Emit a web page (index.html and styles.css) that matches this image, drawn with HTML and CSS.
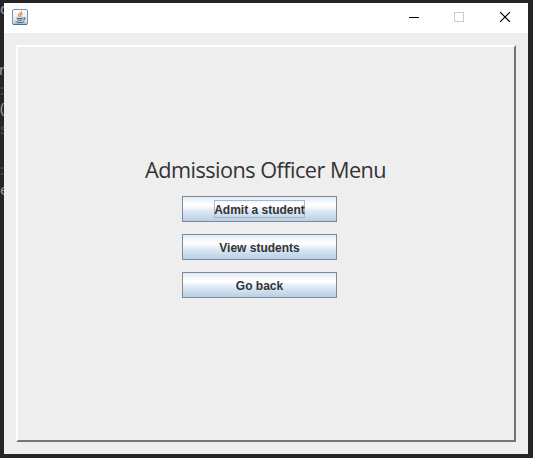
FILE: index.html
```
<!DOCTYPE html>
<html lang="en">
<head>
<meta charset="utf-8">
<title>Admissions Officer Menu</title>
<link rel="stylesheet" href="styles.css">
</head>
<body>
<div class="editor" aria-hidden="true">
  <span class="code code-d">d</span>
  <span class="code code-r">r</span>
  <span class="code code-i">:</span>
  <span class="code code-paren">(</span>
  <span class="code code-s">s</span>
  <span class="code code-i2">:</span>
  <span class="code code-e">e</span>
</div>
<div class="window">
  <header class="titlebar">
    <svg class="java" width="16" height="16" viewBox="0 0 16 16">
      <defs><linearGradient id="tile" x1="0" y1="0" x2="0" y2="1"><stop offset="0" stop-color="#fff"/><stop offset="1" stop-color="#d3dce4"/></linearGradient></defs>
      <rect x=".5" y=".5" width="15" height="15" rx="1.5" fill="url(#tile)" stroke="#7295b2"/>
      <path d="M1 15.300h14" stroke="#426f96" stroke-width="1.2"/>
      <path d="M9.6 2.2c.5 2-3.6 2.6-3.1 4.3.2.7.8 1 .9 1.6M10.6 4.6C8.800 5.400 8.200 6 8.900 6.900c.3.5.1.9-.4 1.300" fill="none" stroke="#e8873c" stroke-width="1.200"/>
      <path d="M4.500 8.900c1.800.6 4.600.6 6.500 0M5.300 10.700c1.600.6 3.600.6 5 0M11.300 8.800c2.300-.6 2.200 1.700-.1 2.200M3.500 12.500c2.600 1 6.600 1 9-.1" fill="none" stroke="#456b88" stroke-width="1.100"/>
    </svg>
    <div class="controls">
      <svg width="46" height="30" viewBox="0 0 46 30"><path d="M18 14.500h10" stroke="#000"/></svg>
      <svg width="46" height="30" viewBox="0 0 46 30"><rect x="17.500" y="9.500" width="9" height="9" fill="none" stroke="#ccc"/></svg>
      <svg width="46" height="30" viewBox="0 0 46 30"><path d="M17.500 9.500l9 9M26.500 9.500l-9 9" stroke="#000" stroke-width="1.100" stroke-linecap="square"/></svg>
    </div>
  </header>
  <main class="content">
    <section class="panel">
      <h1>Admissions Officer Menu</h1>
      <div class="buttons">
        <button class="focused"><span>Admit a student</span></button>
        <button><span>View students</span></button>
        <button><span>Go back</span></button>
      </div>
    </section>
  </main>
</div>
</body>
</html>
```
FILE: styles.css
```
* { box-sizing: border-box; }
body {
  margin: 0;
  width: 533px;
  height: 458px;
  padding: 3px 5px 4px 4px;
  background: #252525;
  overflow: hidden;
  font-family: "Liberation Sans", Arial, sans-serif;
}
/* Editor text partly hidden behind the window */
.code {
  position: absolute;
  left: 0;
  font: 15px/16px "Noto Sans", sans-serif;
  color: #9a9aa2;
}
.code-d { top: 0; }
.code-r { top: 61px; left: -1px; }
.code-i { top: 81px; color: #555; }
.code-paren { top: 99px; }
.code-s { top: 120px; color: #555; }
.code-i2 { top: 161px; color: #555; }
.code-e { top: 181px; }
.window {
  position: relative;
  width: 524px;
  height: 451px;
  display: flex;
  flex-direction: column;
  background: #eee;
}
.titlebar {
  height: 30px;
  flex: none;
  display: flex;
  justify-content: space-between;
  padding-left: 8px;
  background: #fff;
}
.java { margin-top: 6px; }
.controls { display: flex; margin-right: -1px; }
.content { flex: 1; display: flex; padding: 12px; }
.panel {
  flex: 1;
  border: 2px solid;
  border-color: #fff #747474 #747474 #fff;
  padding-top: 108px;
}
h1 {
  margin: 0 0 0 127px;
  height: 30px;
  font: 400 21.700px/30px "Open Sans", sans-serif;
  letter-spacing: -0.530px;
  color: #333;
  white-space: nowrap;
}
.buttons {
  display: flex;
  flex-direction: column;
  gap: 12px;
  width: 155px;
  margin: 11px 0 0 164px;
}
button {
  height: 26px;
  padding: 0;
  display: flex;
  align-items: center;
  justify-content: center;
  border: 1px solid #7a8a99;
  background: linear-gradient(#e0eaf4 0%, #fff 30%, #fff 36%, #dce8f3 60%, #b8cfe5 100%);
  color: #333;
  font: bold 12px/16px "Liberation Sans", Arial, sans-serif;
  white-space: nowrap;
}
button span { height: 18px; padding-top: 2px; }
.focused span { box-shadow: inset 0 0 0 1px #a3b8cc; }
```
